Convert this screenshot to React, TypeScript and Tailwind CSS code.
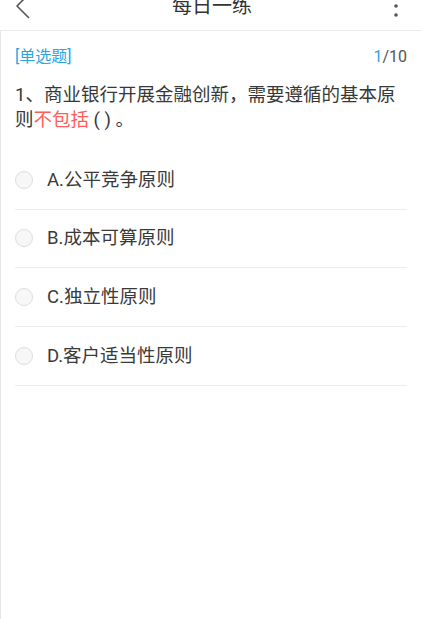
const options = ["A.公平竞争原则", "B.成本可算原则", "C.独立性原则", "D.客户适当性原则"];

function OptionRow({ label }: { label: string }) {
  return (
    <div className="h-[58.67px] flex items-center gap-[14px] border-b border-[#ececec]">
      <span className="w-[18px] h-[18px] rounded-full border border-[#dedede] bg-[#f7f7f7] shrink-0" />
      <span className="text-[18.5px] text-[#3a3a3a] leading-none">{label}</span>
    </div>
  );
}

export default function App() {
  return (
    <div
      className="w-[421px] h-[619px] bg-white flex flex-col overflow-hidden"
      style={{ fontFamily: 'Roboto, "Noto Sans CJK SC", sans-serif' }}
    >
      <header className="h-[31px] shrink-0 overflow-hidden border-b border-[#ebebeb]">
        <div className="h-[48px] -mt-[18px] flex items-center justify-between px-[14px]">
          <svg width="16" height="26" viewBox="0 0 16 26" fill="none" className="ml-[1px]">
            <polyline points="14,1 2,13 14,25" stroke="#555" strokeWidth="1.6" strokeLinejoin="round" />
          </svg>
          <h1 className="text-[20px] text-[#333] leading-none">每日一练</h1>
          <svg width="6" height="24" viewBox="0 0 6 24" className="mr-[8px]">
            <circle cx="3" cy="3" r="1.8" fill="#555" />
            <circle cx="3" cy="12" r="1.8" fill="#555" />
            <circle cx="3" cy="21" r="1.8" fill="#555" />
          </svg>
        </div>
      </header>
      <main className="flex-1 border-l border-[#e6e6e6] pl-[14px] pr-[14px]">
        <div className="mt-[14px] h-[24px] flex items-center justify-between text-[16px]">
          <span className="text-[#2aa6df]">[单选题]</span>
          <span className="text-[#555]">
            <span className="text-[#2aa6df]">1</span>/10
          </span>
        </div>
        <p className="mt-[14px] text-[18.5px] leading-[25px] text-[#383838]">
          1、商业银行开展金融创新，需要遵循的基本原则<span className="text-[#ff5b5b]">不包括</span> ( ) 。
        </p>
        <div className="mt-[18px]">
          {options.map((o) => (
            <OptionRow key={o} label={o} />
          ))}
        </div>
      </main>
    </div>
  );
}
